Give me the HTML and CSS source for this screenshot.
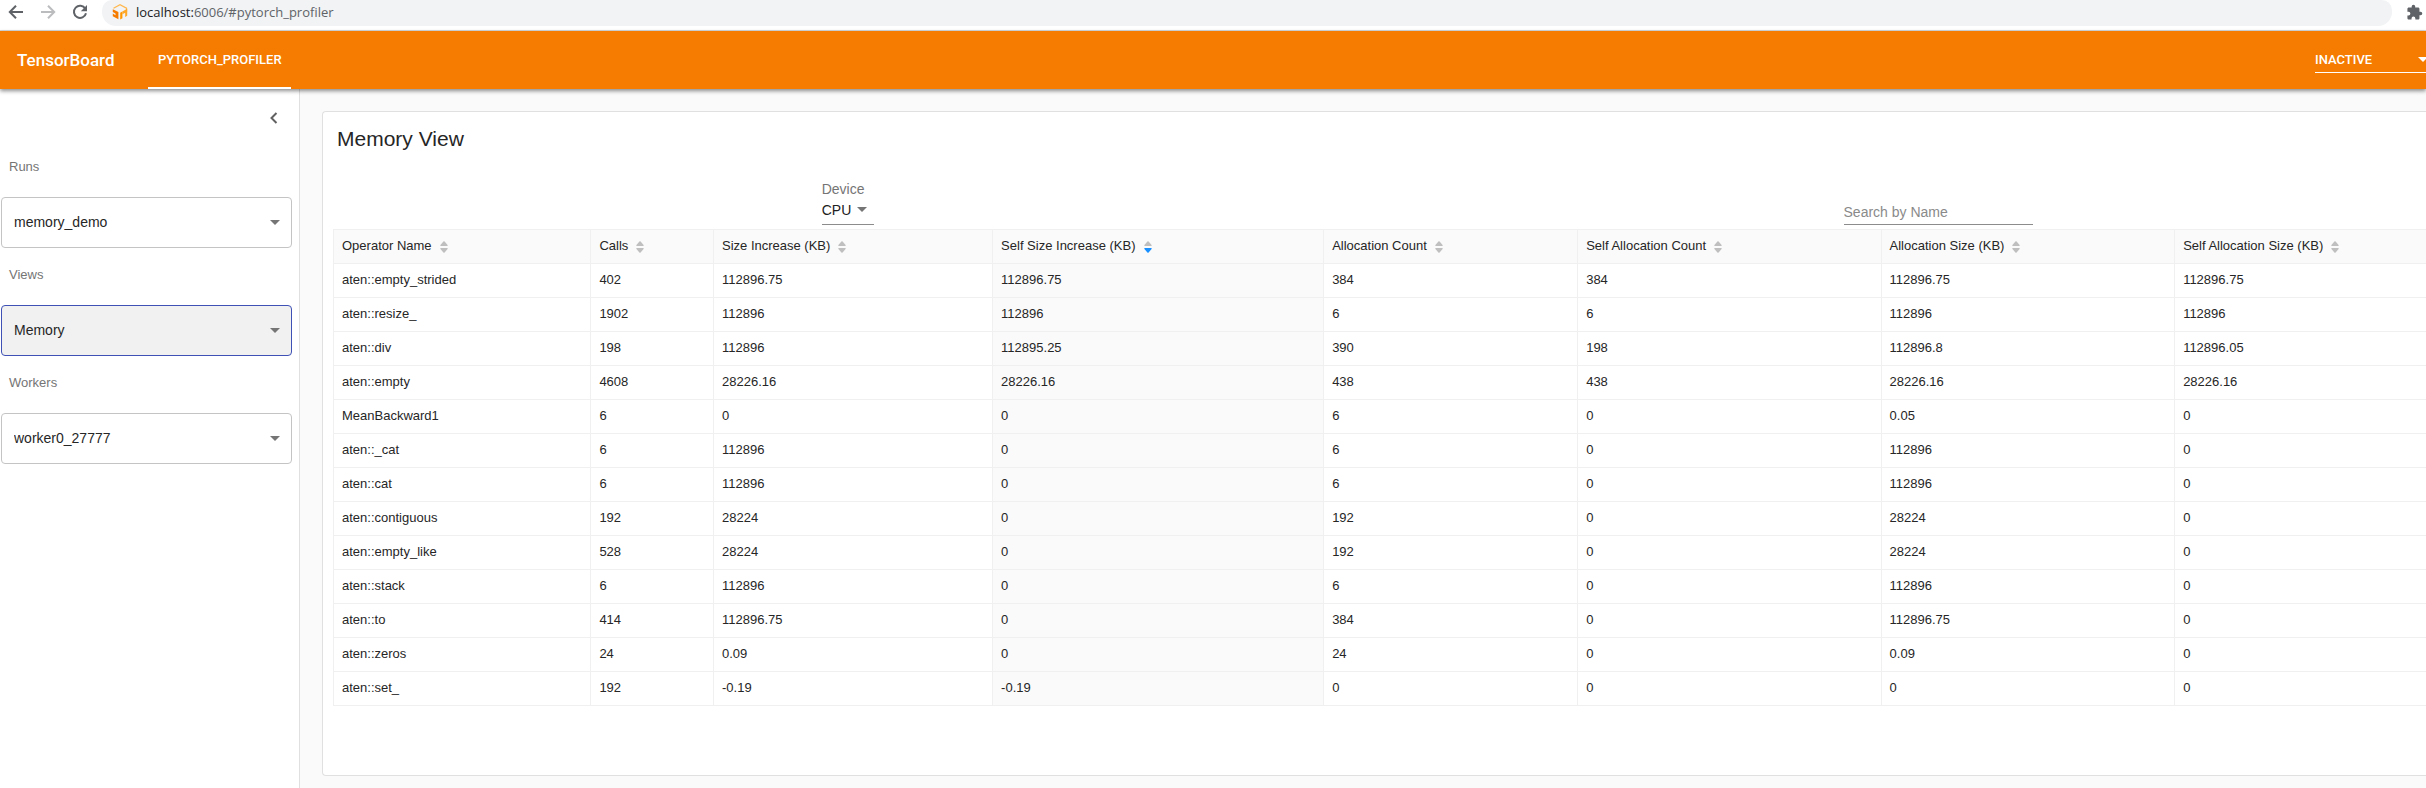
FILE: index.html
```html
<!DOCTYPE html>
<html lang="en">
<head>
<meta charset="utf-8">
<title>TensorBoard</title>
<link rel="stylesheet" href="styles.css">
</head>
<body>
<svg class="sprite" aria-hidden="true">
  <symbol id="caret" viewBox="0 0 10 5"><path d="M0 0h10L5 5z" fill="currentColor"/></symbol>
  <symbol id="sort" viewBox="0 0 8 12"><path class="up" d="M3.4.6a.8.8 0 0 1 1.2 0L7.6 4c.3.4.1.9-.4.9H.8c-.5 0-.7-.5-.4-.9z"/><path class="down" d="M3.4 11.4a.8.8 0 0 0 1.2 0L7.6 8c.3-.4.1-.9-.4-.9H.8c-.5 0-.7.5-.4.9z"/></symbol>
</svg>

<div class="browser">
  <button class="nav-btn" aria-label="Back"><svg viewBox="0 0 16 16"><path d="M15 8H2.5M8 1.8 1.8 8 8 14.2"/></svg></button>
  <button class="nav-btn off" aria-label="Forward"><svg viewBox="0 0 16 16"><path d="M1 8h12.5M8 1.8 14.2 8 8 14.2"/></svg></button>
  <button class="nav-btn" aria-label="Reload"><svg viewBox="0 0 16 16"><path d="M13.3 4.7A6.1 6.1 0 1 0 14 9.2"/><path class="solid" d="M15 1v6.2H8.8z"/></svg></button>
  <div class="address">
    <svg class="favicon" viewBox="0 0 16 16"><path d="M1.5 4.2 8 .8l6.5 3.4v4" fill="none" stroke="#ffb74d" stroke-width="1.2"/><path d="M.8 5.2 6.4 8v7.2L.8 12.2V9.6l2.7 1.6V9.4L.8 8z" fill="#f57c00"/><path d="M8.2 8.8l2.2-1.3v6.7l-2.2 1.2z" fill="#ff9800"/><path d="M10.4 7.5l4.8-2.7v7l-2 1.1V8.8l-2.8 1.5z" fill="#ffa726"/></svg>
    <span class="url"><b>localhost:</b>6006/#pytorch_profiler</span>
  </div>
  <button class="ext-btn" aria-label="Extensions"><svg viewBox="0 0 24 24"><path d="M20.5 11H19V7c0-1.100-.9-2-2-2h-4V3.500a2.500 2.500 0 0 0-5 0V5H4c-1.100 0-2 .9-2 2v3.800h1.500a2.700 2.700 0 0 1 0 5.400H2V20c0 1.100.9 2 2 2h3.800v-1.500a2.700 2.700 0 0 1 5.400 0V22H17c1.100 0 2-.9 2-2v-4h1.500a2.500 2.500 0 0 0 0-5z"/></svg></button>
</div>

<header class="topbar">
  <div class="brand">TensorBoard</div>
  <nav class="tabs"><a class="tab" href="#pytorch_profiler">PYTORCH_PROFILER</a></nav>
  <div class="inactive">
    <select aria-label="Inactive dashboards"><option>INACTIVE</option></select>
    <svg class="caret"><use href="#caret"/></svg>
  </div>
</header>

<div class="page">
  <aside class="sidebar">
    <button class="collapse" aria-label="Collapse sidebar"><svg viewBox="0 0 8 12"><path d="M6.5 1 1.5 6l5 5"/></svg></button>
    <label class="side-label" for="runs">Runs</label>
    <div class="box">
      <select id="runs"><option>memory_demo</option></select>
      <svg class="caret"><use href="#caret"/></svg>
    </div>
    <label class="side-label" for="views">Views</label>
    <div class="box focused">
      <select id="views"><option>Memory</option></select>
      <svg class="caret"><use href="#caret"/></svg>
    </div>
    <label class="side-label" for="workers">Workers</label>
    <div class="box">
      <select id="workers"><option>worker0_27777</option></select>
      <svg class="caret"><use href="#caret"/></svg>
    </div>
  </aside>

  <main class="content">
    <section class="card">
      <h1>Memory View</h1>
      <div class="toolbar">
        <div class="device">
          <label for="device">Device</label>
          <div class="device-field">
            <select id="device"><option>CPU</option></select>
            <svg class="caret"><use href="#caret"/></svg>
          </div>
        </div>
        <input class="search" type="text" aria-label="Search by Name" placeholder="Search by Name">
      </div>
      <table class="ops">
        <colgroup><col class="c-name"><col class="c-calls"><col class="c-size"><col class="c-self-size"><col class="c-count"><col class="c-self-count"><col class="c-alloc"><col></colgroup>
        <thead>
          <tr>
            <th>Operator Name<svg class="sort"><use href="#sort"/></svg></th>
            <th>Calls<svg class="sort"><use href="#sort"/></svg></th>
            <th>Size Increase (KB)<svg class="sort"><use href="#sort"/></svg></th>
            <th aria-sort="descending">Self Size Increase (KB)<svg class="sort desc"><use href="#sort"/></svg></th>
            <th>Allocation Count<svg class="sort"><use href="#sort"/></svg></th>
            <th>Self Allocation Count<svg class="sort"><use href="#sort"/></svg></th>
            <th>Allocation Size (KB)<svg class="sort"><use href="#sort"/></svg></th>
            <th>Self Allocation Size (KB)<svg class="sort"><use href="#sort"/></svg></th>
          </tr>
        </thead>
        <tbody>
          <tr><td>aten::empty_strided</td><td>402</td><td>112896.75</td><td>112896.75</td><td>384</td><td>384</td><td>112896.75</td><td>112896.75</td></tr>
          <tr><td>aten::resize_</td><td>1902</td><td>112896</td><td>112896</td><td>6</td><td>6</td><td>112896</td><td>112896</td></tr>
          <tr><td>aten::div</td><td>198</td><td>112896</td><td>112895.25</td><td>390</td><td>198</td><td>112896.8</td><td>112896.05</td></tr>
          <tr><td>aten::empty</td><td>4608</td><td>28226.16</td><td>28226.16</td><td>438</td><td>438</td><td>28226.16</td><td>28226.16</td></tr>
          <tr><td>MeanBackward1</td><td>6</td><td>0</td><td>0</td><td>6</td><td>0</td><td>0.05</td><td>0</td></tr>
          <tr><td>aten::_cat</td><td>6</td><td>112896</td><td>0</td><td>6</td><td>0</td><td>112896</td><td>0</td></tr>
          <tr><td>aten::cat</td><td>6</td><td>112896</td><td>0</td><td>6</td><td>0</td><td>112896</td><td>0</td></tr>
          <tr><td>aten::contiguous</td><td>192</td><td>28224</td><td>0</td><td>192</td><td>0</td><td>28224</td><td>0</td></tr>
          <tr><td>aten::empty_like</td><td>528</td><td>28224</td><td>0</td><td>192</td><td>0</td><td>28224</td><td>0</td></tr>
          <tr><td>aten::stack</td><td>6</td><td>112896</td><td>0</td><td>6</td><td>0</td><td>112896</td><td>0</td></tr>
          <tr><td>aten::to</td><td>414</td><td>112896.75</td><td>0</td><td>384</td><td>0</td><td>112896.75</td><td>0</td></tr>
          <tr><td>aten::zeros</td><td>24</td><td>0.09</td><td>0</td><td>24</td><td>0</td><td>0.09</td><td>0</td></tr>
          <tr><td>aten::set_</td><td>192</td><td>-0.19</td><td>-0.19</td><td>0</td><td>0</td><td>0</td><td>0</td></tr>
        </tbody>
      </table>
    </section>
  </main>
</div>
</body>
</html>
```
FILE: styles.css
```css
* { box-sizing: border-box; }
html { height: 100%; }
body {
  margin: 0;
  min-height: 100%;
  display: flex;
  flex-direction: column;
  background: #fafafa;
  color: #262626;
  font-family: "Liberation Sans", Arial, sans-serif;
  font-size: 13px;
}
button { border: 0; padding: 0; background: none; cursor: pointer; }
select, input { font-family: inherit; color: inherit; }
select { appearance: none; border: 0; background: none; padding: 0; width: 100%; cursor: pointer; }
.sprite { position: absolute; width: 0; height: 0; }
.caret { width: 10px; height: 5px; color: #757575; pointer-events: none; flex: none; }

/* Browser bar */
.browser {
  display: flex;
  align-items: flex-start;
  height: 31px;
  padding-left: 8px;
  background: #fff;
  border-bottom: 1px solid #d5d8dc;
}
.nav-btn { width: 16px; height: 24px; margin-right: 16px; color: #5f6368; }
.nav-btn.off { color: #babcbe; }
.nav-btn svg { display: block; width: 16px; height: 16px; }
.nav-btn path { fill: none; stroke: currentColor; stroke-width: 2; }
.nav-btn .solid { fill: currentColor; stroke: none; }
.address {
  flex: 1;
  display: flex;
  align-items: center;
  gap: 8px;
  height: 26px;
  padding: 0 10px 2px;
  margin-left: -2px;
  background: #f1f3f4;
  border-radius: 10px 10px 14px 14px;
}
.favicon { width: 16px; height: 16px; }
.url { font: 13px/20px "Open Sans", "Noto Sans", sans-serif; color: #5f6368; }
.url b { font-weight: 400; color: #202124; }
.ext-btn { width: 34px; height: 24px; padding-left: 14px; }
.ext-btn svg { display: block; width: 17px; height: 17px; fill: #5f6368; }

/* Application header */
.topbar {
  position: relative;
  display: flex;
  align-items: center;
  height: 58px;
  padding-left: 17px;
  background: #f57c00;
  color: #fff;
  font-family: Roboto, sans-serif;
  box-shadow: 0 2px 4px rgba(0, 0, 0, .45);
}
.brand { width: 131px; font-size: 17px; font-weight: 500; }
.tabs { display: flex; align-self: stretch; }
.tab {
  display: flex;
  align-items: center;
  padding: 0 9px 0 10px;
  border-bottom: 2px solid #fff;
  color: inherit;
  font-size: 13px;
  font-weight: 500;
  text-decoration: none;
}
.inactive {
  display: flex;
  align-items: center;
  width: 111px;
  height: 25px;
  margin-left: auto;
  border-bottom: 1px solid #fff;
  overflow: hidden;
}
.inactive select { font-size: 13px; font-weight: 500; }
.inactive .caret { color: #fff; margin-right: -2px; }

/* Sidebar */
.page { flex: 1; display: flex; }
.sidebar {
  display: flex;
  flex-direction: column;
  width: 300px;
  flex: none;
  padding: 16px 7px 0 1px;
  background: #fff;
  border-right: 1px solid #e0e0e0;
}
.collapse { align-self: flex-end; width: 24px; height: 26px; margin-right: 6px; }
.collapse svg { display: block; width: 8px; height: 12px; margin: auto; fill: none; stroke: #616161; stroke-width: 2; }
.side-label { margin: 26px 0 20px; padding-left: 8px; line-height: 20px; color: #757575; }
.box + .side-label { margin-top: 17px; }
.box {
  display: flex;
  align-items: center;
  height: 51px;
  padding-right: 11px;
  border: 1px solid #c4c4c4;
  border-radius: 4px;
}
.box select { height: 100%; padding: 0 0 2px 12px; font-size: 14px; }
.focused { border-color: #3f51b5; background: #f1f1f1; }

/* Memory card */
.content { flex: 1; min-width: 0; display: flex; padding: 22px 0 12px 22px; }
.card {
  flex: 1;
  min-width: 0;
  padding: 15px 0 60px 10px;
  background: #fff;
  border: 1px solid #e0e0e0;
  border-right: 0;
  border-radius: 4px 0 0 4px;
}
h1 { margin: 0; padding-left: 4px; font-size: 21px; line-height: 24px; font-weight: 400; }
.toolbar {
  display: flex;
  align-items: flex-end;
  justify-content: space-between;
  margin: 28px 0 4px;
  padding: 0 18.8% 0 23.35%;
}
.device { width: 52px; font-size: 14px; color: #757575; }
.device label { display: block; line-height: 20px; }
.device-field {
  display: flex;
  align-items: center;
  height: 26px;
  padding: 0 7px 4px 0;
  border-bottom: 1px solid #8c8c8c;
}
.device-field select { font-size: 14px; color: #212121; }
.search {
  width: 189px;
  height: 26px;
  padding: 0;
  border: 0;
  border-bottom: 1px solid #8c8c8c;
  background: none;
  font-size: 14px;
}
.search::placeholder { color: #8a8a8a; opacity: 1; }

/* Operator table */
.ops { width: 100%; table-layout: fixed; border-collapse: collapse; }
.c-name { width: 12.3%; }
.c-calls { width: 5.86%; }
.c-size { width: 13.34%; }
.c-self-size { width: 15.82%; }
.c-count { width: 12.14%; }
.c-self-count { width: 14.5%; }
.c-alloc { width: 14.03%; }
.ops th, .ops td {
  height: 34px;
  padding: 0 8px 2px;
  border: 1px solid #f0f0f0;
  border-right: 0;
  text-align: left;
  font-weight: 400;
  white-space: nowrap;
}
.ops th { background: #fafafa; }
.ops td:nth-child(4) { background: #fafafa; }
.sort { width: 8px; height: 12px; margin-left: 8px; vertical-align: -3px; fill: #bfbfbf; }
.sort.desc { --down: #1890ff; }
.down { fill: var(--down, #bfbfbf); }
```
